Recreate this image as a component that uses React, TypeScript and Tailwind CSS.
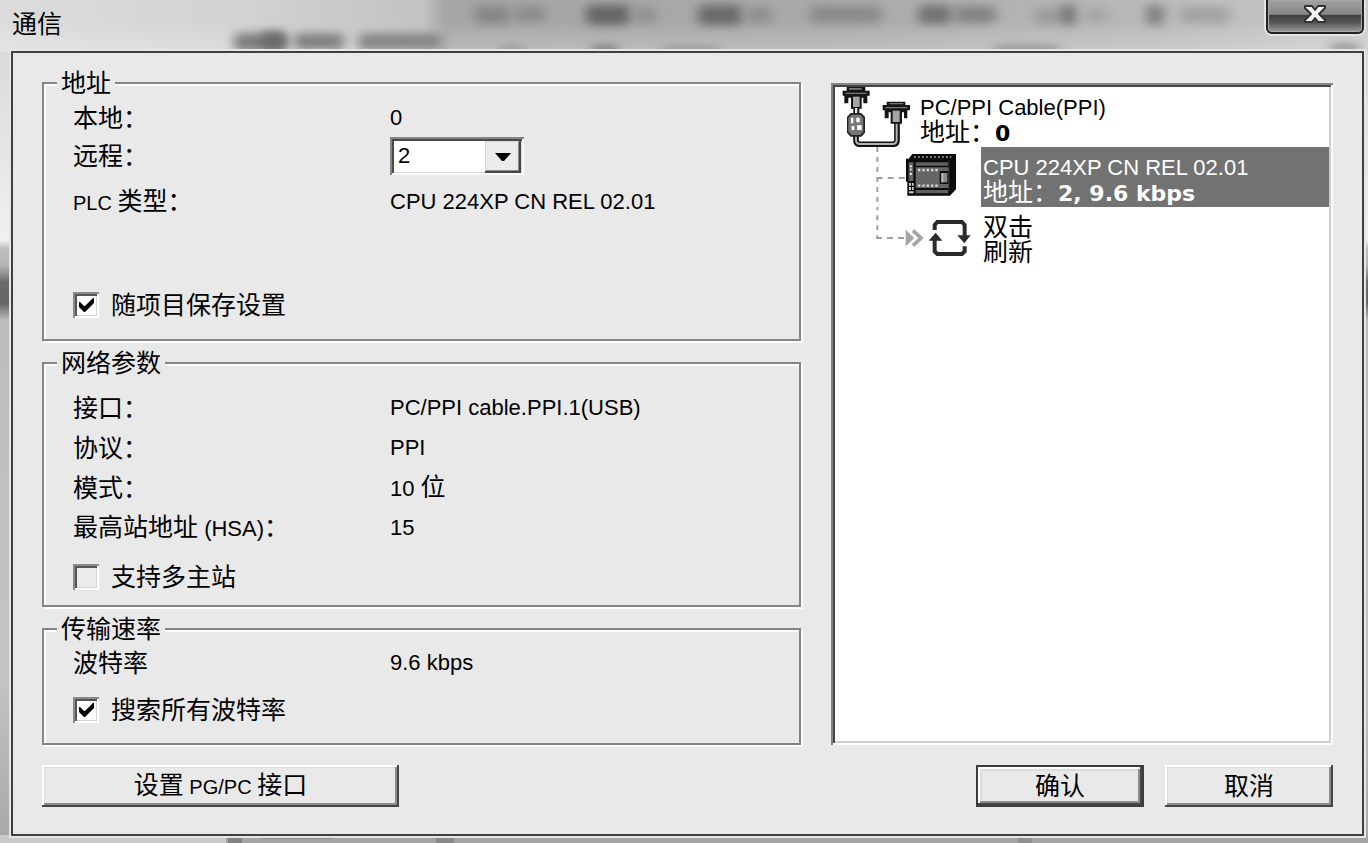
import { useState } from "react";
import type { ReactNode } from "react";

const glassMarks = [
  { x: 234, y: 33, w: 52, h: 18, tone: "#7c7c7c" },
  { x: 262, y: 32, w: 24, h: 18, tone: "#6a6a6a" },
  { x: 294, y: 33, w: 50, h: 17, tone: "#808080" },
  { x: 358, y: 33, w: 84, h: 17, tone: "#858585" },
  { x: 474, y: 6, w: 36, h: 18, tone: "#868686" },
  { x: 514, y: 6, w: 32, h: 16, tone: "#8c8c8c" },
  { x: 586, y: 5, w: 44, h: 20, tone: "#666666" },
  { x: 634, y: 7, w: 22, h: 16, tone: "#909090" },
  { x: 698, y: 5, w: 44, h: 20, tone: "#6a6a6a" },
  { x: 746, y: 7, w: 26, h: 16, tone: "#8e8e8e" },
  { x: 810, y: 6, w: 72, h: 17, tone: "#8a8a8a" },
  { x: 918, y: 5, w: 34, h: 19, tone: "#727272" },
  { x: 954, y: 6, w: 42, h: 17, tone: "#838383" },
  { x: 1034, y: 8, w: 26, h: 16, tone: "#9a9a9a" },
  { x: 1060, y: 5, w: 16, h: 20, tone: "#757575" },
  { x: 1084, y: 8, w: 24, h: 14, tone: "#a4a4a4" },
  { x: 1146, y: 5, w: 18, h: 20, tone: "#808080" },
  { x: 1180, y: 7, w: 50, h: 16, tone: "#a2a2a2" },
  { x: 500, y: 48, w: 24, h: 6, tone: "#808080" },
  { x: 592, y: 46, w: 26, h: 8, tone: "#707070" },
  { x: 660, y: 48, w: 60, h: 6, tone: "#858585" },
  { x: 994, y: 47, w: 66, h: 7, tone: "#808080" },
  { x: 1330, y: 44, w: 30, h: 8, tone: "#888888" },
];

function Group({ title, className, children }: { title: string; className: string; children: ReactNode }) {
  return (
    <fieldset
      className={`min-w-0 border-2 border-[#858585] pl-[29px] shadow-[inset_2px_2px_0_#fbfbfb,2px_2px_0_#fbfbfb] ${className}`}
    >
      <legend className="-ml-4 h-7 bg-[#e9e9e9] px-1 leading-7">{title}</legend>
      {children}
    </fieldset>
  );
}

function Row({ label, className = "h-10", children }: { label: ReactNode; className?: string; children: ReactNode }) {
  return (
    <div className={`grid grid-cols-[317px_1fr] items-center ${className}`}>
      <div>{label}</div>
      <div className="text-[22px]">{children}</div>
    </div>
  );
}

function Check({ label, initial, className }: { label: string; initial: boolean; className: string }) {
  const [on, setOn] = useState(initial);
  return (
    <label className={`flex h-9 w-fit items-center gap-3 ${className}`}>
      <span className="relative block size-[26px]">
        <input
          type="checkbox"
          checked={on}
          onChange={(e) => setOn(e.target.checked)}
          className="block size-[26px] appearance-none bg-[#ececec] shadow-[inset_2px_2px_0_#8a8a8a,inset_-2px_-2px_0_#ffffff,inset_4px_4px_0_#555555,inset_-3px_-3px_0_#d4d4d4] checked:bg-white"
        />
        {on && (
          <svg viewBox="0 0 26 26" className="pointer-events-none absolute inset-0 size-[26px]" aria-hidden="true">
            <path d="M6 10v5l5 5h1l9-9V6h-1l-8 8h-1l-4-4z" fill="#000" />
          </svg>
        )}
      </span>
      <span>{label}</span>
    </label>
  );
}

function CableIcon() {
  return (
    <svg viewBox="15 21 255 180" className="h-[60px] w-[85px] shrink-0" aria-hidden="true">
      <path d="M78 160v20q0 13 13 13h97q13 0 13-13v-60" fill="none" stroke="#111" strokeWidth="17" />
      <path d="M78 160v20q0 12 12 12h98q12 0 12-12v-60" fill="none" stroke="#b4b4b4" strokeWidth="6" />
      <path d="M50 21h56v11h13v15h-7v23h-12V53h-5v33h-7v15H70V86h-7V53h-8v17H43V47h-5V32h12z" fill="#151515" />
      <path d="M57 24h38v5H57zM46 38h64v4H46z" fill="#777" />
      <path d="M69 50h20v31H69z" fill="#a5a5a5" />
      <path d="M75 84h7v16h-7z" fill="#e8e8e8" />
      <path d="M62 99h32l11 12v47l-11 12H62l-11-12v-47z" fill="#222" />
      <path d="M64 104h27l9 10v40l-9 11H64l-9-11v-40z" fill="#777" />
      <path d="M63 113h7v17h-7zM79 113h10v14H79zM65 138h8v12h-8zM81 136h14v14H81z" fill="#fff" />
      <path d="M170 65h56v10h14v16h-8v24h-10V97h-6v34h-34V97h-6v18h-12V91h-6V75h12z" fill="#151515" />
      <path d="M178 69h42v4h-42zM166 81h66v4h-66z" fill="#777" />
      <path d="M188 92h21v34h-21z" fill="#a5a5a5" />
    </svg>
  );
}

function PlcIcon() {
  return (
    <svg viewBox="15 201 438 180" className="h-[60px] w-[146px] shrink-0" aria-hidden="true">
      <path d="M142 201V381" stroke="#a0a0a0" strokeWidth="6" strokeDasharray="15 15" fill="none" />
      <path d="M140 294h88" stroke="#a0a0a0" strokeWidth="6" strokeDasharray="18 15" fill="none" />
      <path d="M247 222h131v106l-18 19H232v-42h-4v-69h8z" fill="#0c0c0c" />
      <path d="M252 231h112" stroke="#8a8a8a" strokeWidth="6" strokeDasharray="5 7" />
      <path d="M236 247h14v56h-14z" fill="#666" />
      <path d="M240 256h5v6h-5zM240 266h5v5h-5zM240 279h5v6h-5z" fill="#fff" />
      <path d="M237 309h6v8h-6zM246 309h5v8h-5zM237 321h6v9h-6zM246 321h5v9h-5zM237 334h14v6h-14z" fill="#ccc" />
      <path d="M257 247h97v10h-97zM257 330h97v10h-97z" fill="#606060" />
      <path d="M257 262h99v62h-99z" fill="#666" />
      <path d="M264 270h62M264 317h62" stroke="#d8d8d8" strokeWidth="7" strokeDasharray="7 6" />
      <path d="M329 273h26v39h-26z" fill="#0c0c0c" />
      <path d="M334 279h18v28h-18z" fill="#8b8b8b" />
      <path d="M334 279h6v28h-6z" fill="#bbb" />
      <path d="M357 240v96" stroke="#3c3c3c" strokeWidth="2" />
    </svg>
  );
}

function RefreshIcon() {
  return (
    <svg viewBox="15 381 438 180" className="h-[60px] w-[146px] shrink-0" aria-hidden="true">
      <path d="M142 376v99" stroke="#a0a0a0" strokeWidth="6" strokeDasharray="15 15" fill="none" />
      <path d="M138 474h90" stroke="#a0a0a0" strokeWidth="6" strokeDasharray="18 15" fill="none" />
      <path d="M227 449l26 25-26 25z" fill="#a5a5a5" />
      <path d="M249 452l24 22-24 23" fill="none" stroke="#a5a5a5" strokeWidth="11" />
      <g fill="none" stroke="#2b2b2b" strokeWidth="12">
        <path d="M314 450v-15l8-9h74l8 9v36" />
        <path d="M404 499v15l-8 8h-74l-8-8v-36" />
      </g>
      <path d="M382 466h40l-19 24zM296 482h41l-20-24z" fill="#2b2b2b" />
    </svg>
  );
}

const raised =
  "flex h-[42px] items-center justify-center shadow-[inset_-2px_-2px_0_#464646,inset_2px_2px_0_#ffffff,inset_-4px_-4px_0_#8c8c8c,inset_3px_3px_0_#dcdcdc]";

export default function App() {
  const [remote, setRemote] = useState("2");
  return (
    <main
      lang="zh-CN"
      className="relative isolate flex min-h-screen flex-col overflow-hidden bg-[linear-gradient(180deg,#d4d4d4_0%,#f0f0f0_28.5%,#bebebe_29.5%,#b4b4b4_31.5%,#6a6a6a_33.5%,#666666_36%,#bcbcbc_38%,#c4c4c4_80%,#a8a8a8_100%)] pr-1 pb-[7px] pl-[11px] font-['Liberation_Sans','Noto_Sans_CJK_SC',sans-serif] text-[25px] leading-8 text-black"
    >
      <svg className="absolute inset-x-0 top-0 -z-10 h-[52px] w-full" aria-hidden="true">
        <defs>
          <linearGradient id="bar" x1="0" x2="1" y1="0" y2="0">
            <stop offset="0" stopColor="#dcdcdc" />
            <stop offset=".18" stopColor="#d2d2d2" />
            <stop offset=".31" stopColor="#c2c2c2" />
            <stop offset=".325" stopColor="#a6a6a6" />
            <stop offset=".6" stopColor="#a9a9a9" />
            <stop offset=".85" stopColor="#bababa" />
            <stop offset="1" stopColor="#cbcbcb" />
          </linearGradient>
          <linearGradient id="fade" x1="0" x2="0" y1="0" y2="1">
            <stop offset=".4" stopColor="#fff" stopOpacity="0" />
            <stop offset="1" stopColor="#fff" stopOpacity=".25" />
          </linearGradient>
          <filter id="soft" x="-60%" y="-150%" width="220%" height="400%">
            <feGaussianBlur stdDeviation="6 5" />
          </filter>
        </defs>
        <rect width="100%" height="52" fill="url(#bar)" />
        <rect width="100%" height="52" fill="url(#fade)" />
        {glassMarks.map((m) => (
          <rect key={`${m.x}-${m.y}`} x={m.x} y={m.y} width={m.w} height={m.h} rx="5" fill={m.tone} filter="url(#soft)" />
        ))}
      </svg>
      <svg className="absolute inset-x-0 bottom-0 -z-10 h-2 w-full" aria-hidden="true">
        <rect width="100%" height="8" fill="#a4a4a4" />
        <rect width="226" height="8" fill="#cacaca" />
        <rect x="228" width="14" height="8" fill="#828282" />
        <rect x="262" width="70" height="4" fill="#8c8c8c" />
        <rect x="436" width="18" height="8" fill="#8a8a8a" />
        <rect x="1018" width="14" height="8" fill="#909090" />
      </svg>

      <header className="flex h-[51px] shrink-0 items-start justify-between">
        <h1 className="pt-2 pl-px">通信</h1>
        <button
          type="button"
          aria-label="关闭"
          className="flex h-[34px] w-[98px] items-center justify-center rounded-b-md border-2 border-t-0 border-[#222] bg-[linear-gradient(180deg,#a2a2a2_0%,#858585_45%,#3f3f3f_47%,#555555_70%,#9a9a9a_100%)] pb-1 shadow-[0_0_0_2px_#e4e4e4,inset_0_0_0_1px_#a8a8a8]"
        >
          <svg viewBox="0 0 26 20" className="h-5 w-[26px]" aria-hidden="true">
            <path
              d="M3 2h7l3 4 3-4h7v2l-6 6 6 6v2h-7l-3-4-3 4H3v-2l6-6-6-6z"
              fill="#f4f4f4"
              stroke="#333"
              strokeWidth="2"
              strokeLinejoin="round"
            />
          </svg>
        </button>
      </header>

      <section className="grid flex-1 grid-cols-[759fr_502fr] grid-rows-[auto_auto] content-start gap-x-[30px] gap-y-5 border-2 border-[#404040] bg-[#e9e9e9] px-[29px] pt-4 pb-6 shadow-[0_0_0_2px_#e6e6e6]">
        <div className="flex min-w-0 flex-col gap-2">
          <Group title="地址" className="pt-[3px] pb-4">
            <Row label="本地：" className="h-9">0</Row>
            <Row label={<label htmlFor="remote">远程：</label>}>
              <div className="relative h-[38px] w-[134px]">
                <select
                  id="remote"
                  value={remote}
                  onChange={(e) => setRemote(e.target.value)}
                  className="size-full appearance-none bg-white pl-2 text-[22px] shadow-[inset_2px_2px_0_#858585,inset_-2px_-2px_0_#fafafa,inset_4px_4px_0_#4a4a4a,inset_-3px_-3px_0_#d8d8d8]"
                >
                  <option>2</option>
                  <option>3</option>
                  <option>4</option>
                </select>
                <span className="pointer-events-none absolute top-1 right-[3px] bottom-0.5 flex w-9 items-center justify-center bg-[#ececec] shadow-[inset_-2px_-2px_0_#464646,inset_1px_1px_0_#d8d8d8,inset_-3px_-3px_0_#8c8c8c]">
                  <svg viewBox="0 0 16 8" className="h-2 w-4" aria-hidden="true">
                    <path d="M0 0h16L9 8H7z" />
                  </svg>
                </span>
              </div>
            </Row>
            <Row
              label={
                <>
                  <span className="text-[20px]">PLC </span>类型：
                </>
              }
              className="mt-2 h-9"
            >
              CPU 224XP CN REL 02.01
            </Row>
            <Check label="随项目保存设置" initial className="mt-[67px]" />
          </Group>

          <Group title="网络参数" className="pt-[11px] pb-2.5">
            <Row label="接口：">PC/PPI cable.PPI.1(USB)</Row>
            <Row label="协议：">PPI</Row>
            <Row label="模式：">
              10 <span className="text-[25px]">位</span>
            </Row>
            <Row
              label={
                <>
                  最高站地址<span className="text-[22px]"> (HSA)</span>：
                </>
              }
            >
              15
            </Row>
            <Check label="支持多主站" initial={false} className="mt-[11px]" />
          </Group>

          <Group title="传输速率" className="pt-0.5 pb-[15px]">
            <Row label="波特率" className="h-9">9.6 kbps</Row>
            <Check label="搜索所有波特率" initial className="mt-[11px]" />
          </Group>
        </div>

        <ul className="mt-3.5 min-w-0 bg-white p-1 leading-[25px] shadow-[inset_2px_2px_0_#858585,inset_-2px_-2px_0_#fbfbfb,inset_4px_4px_0_#464646,inset_-4px_-4px_0_#d0d0d0]">
          <li className="flex h-[60px]">
            <CableIcon />
            <div className="pt-2">
              <div className="text-[22px]">PC/PPI Cable(PPI)</div>
              <div>
                地址：<b className="font-['DejaVu_Sans'] text-[22px] leading-none">0</b>
              </div>
            </div>
          </li>
          <li className="flex h-[60px]">
            <PlcIcon />
            <div className="min-w-0 flex-1 bg-[#727272] pt-2 pl-0.5 text-white">
              <div className="text-[22px]">CPU 224XP CN REL 02.01</div>
              <div>
                地址：<b className="font-['DejaVu_Sans'] text-[22px] leading-none">2, 9.6 kbps</b>
              </div>
            </div>
          </li>
          <li className="flex h-[60px]">
            <RefreshIcon />
            <button type="button" className="flex h-[60px] flex-col pt-2 pl-0.5 text-left">
              <span>双击</span>
              <span>刷新</span>
            </button>
          </li>
        </ul>

        <button type="button" className={`w-[357px] ${raised}`}>
          <span>
            设置<span className="text-[20px]"> PG/PC </span>接口
          </span>
        </button>
        <div className="flex justify-end gap-[21px]">
          <button
            type="button"
            className="flex h-[42px] w-[168px] items-center justify-center border-2 border-[#3c3c3c] shadow-[inset_-2px_-2px_0_#464646,inset_2px_2px_0_#ffffff,inset_-4px_-4px_0_#8c8c8c,inset_4px_4px_0_#dcdcdc]"
          >
            确认
          </button>
          <button type="button" className={`w-[168px] ${raised}`}>
            取消
          </button>
        </div>
      </section>
    </main>
  );
}
